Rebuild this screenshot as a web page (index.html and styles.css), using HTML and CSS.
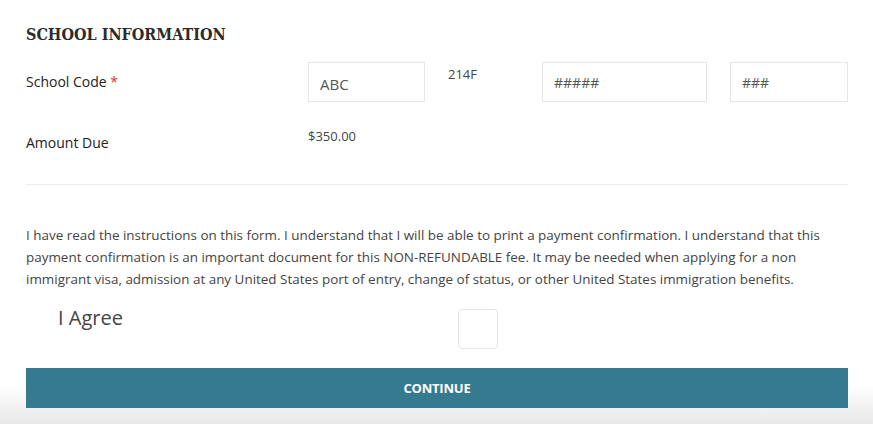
FILE: index.html
```html
<!DOCTYPE html>
<html lang="en">
<head>
<meta charset="utf-8">
<title>School Information</title>
<link rel="stylesheet" href="styles.css">
</head>
<body>
<div class="page">
  <h2 class="section-title">SCHOOL INFORMATION</h2>
  <div class="form-grid">
    <div class="label">School Code <span class="req">*</span></div>
    <div class="field-row">
      <input class="input input-a" type="text" value="ABC">
      <span class="value value-code">214F</span>
      <input class="input input-b" type="text" placeholder="#####">
      <input class="input input-c" type="text" placeholder="###">
    </div>
    <div class="label">Amount Due</div>
    <div class="field-row">
      <span class="value">$350.00</span>
    </div>
  </div>
  <hr class="divider">
  <p class="terms">I have read the instructions on this form. I understand that I will be able to print a payment confirmation. I understand that this payment confirmation is an important document for this NON-REFUNDABLE fee. It may be needed when applying for a non immigrant visa, admission at any United States port of entry, change of status, or other United States immigration benefits.</p>
  <div class="agree-row">
    <span class="agree-label">I Agree</span>
    <span class="checkbox"></span>
  </div>
  <button class="continue" type="button">CONTINUE</button>
</div>
<div class="bottom-fade"></div>
</body>
</html>
```
FILE: styles.css
```css
* { box-sizing: border-box; }
html, body { margin: 0; padding: 0; }
body {
  background: #fff;
  font-family: "Open Sans", "Liberation Sans", sans-serif;
  color: #333;
  width: 873px;
  height: 424px;
  overflow: hidden;
  position: relative;
}
.page {
  padding: 24px 25px 0 26px;
  width: 873px;
}
.section-title {
  margin: 0;
  font-family: "DejaVu Serif", serif;
  font-stretch: condensed;
  font-weight: bold;
  font-size: 16px;
  line-height: 22px;
  color: #2b2b2b;
}
.form-grid {
  display: grid;
  grid-template-columns: 282px 1fr;
  row-gap: 21px;
  margin-top: 16px;
}
.label {
  font-size: 14px;
  line-height: 20px;
  padding-top: 10px;
  color: #222;
  height: 40px;
}
.req { color: #d9302c; }
.field-row {
  display: flex;
  align-items: flex-start;
}
.value {
  font-size: 13px;
  line-height: 18px;
  color: #444;
  padding-top: 3px;
}
.field-row:last-child .value { padding-top: 4px; }
.value-code {
  margin-left: 23px;
  width: 94px;
}
.input {
  height: 40px;
  border: 1px solid #e6e6e6;
  border-radius: 0;
  padding: 0 11px;
  font-family: "Open Sans", "Liberation Sans", sans-serif;
  font-size: 15px;
  color: #555;
  background: #fff;
  outline: none;
}
.input::placeholder { color: #555; font-size: 14px; }
.input-a { width: 117px; padding-top: 4px; }
.input-b { width: 165px; }
.input-c { width: 118px; margin-left: 23px; }
.divider {
  border: 0;
  border-top: 1px solid #ececec;
  margin: 21px 0 0 0;
  width: 822px;
}
.terms {
  margin: 39px 0 0 0;
  font-size: 13.45px;
  line-height: 22px;
  color: #444;
  width: 822px;
}
.agree-row {
  display: flex;
  align-items: flex-start;
  margin-top: 15px;
}
.agree-label {
  font-size: 20px;
  line-height: 26px;
  color: #444;
  margin-left: 32px;
  width: 400px;
}
.checkbox {
  width: 40px;
  height: 40px;
  border: 1px solid #e6e6e6;
  border-radius: 4px;
  margin-top: 4px;
}
.continue {
  display: block;
  margin-top: 19px;
  width: 822px;
  height: 40px;
  border: 0;
  background: #367a8f;
  color: #fff;
  font-family: "Open Sans", "Liberation Sans", sans-serif;
  font-weight: 700;
  font-size: 13px;
  letter-spacing: -0.2px;
  cursor: pointer;
  position: relative;
  z-index: 1;
}
.bottom-fade {
  position: absolute;
  left: 0;
  right: 0;
  bottom: 0;
  height: 40px;
  background: linear-gradient(to bottom, rgba(238,238,238,0) 0%, rgba(232,232,232,1) 100%);
  pointer-events: none;
  z-index: 0;
}
```
